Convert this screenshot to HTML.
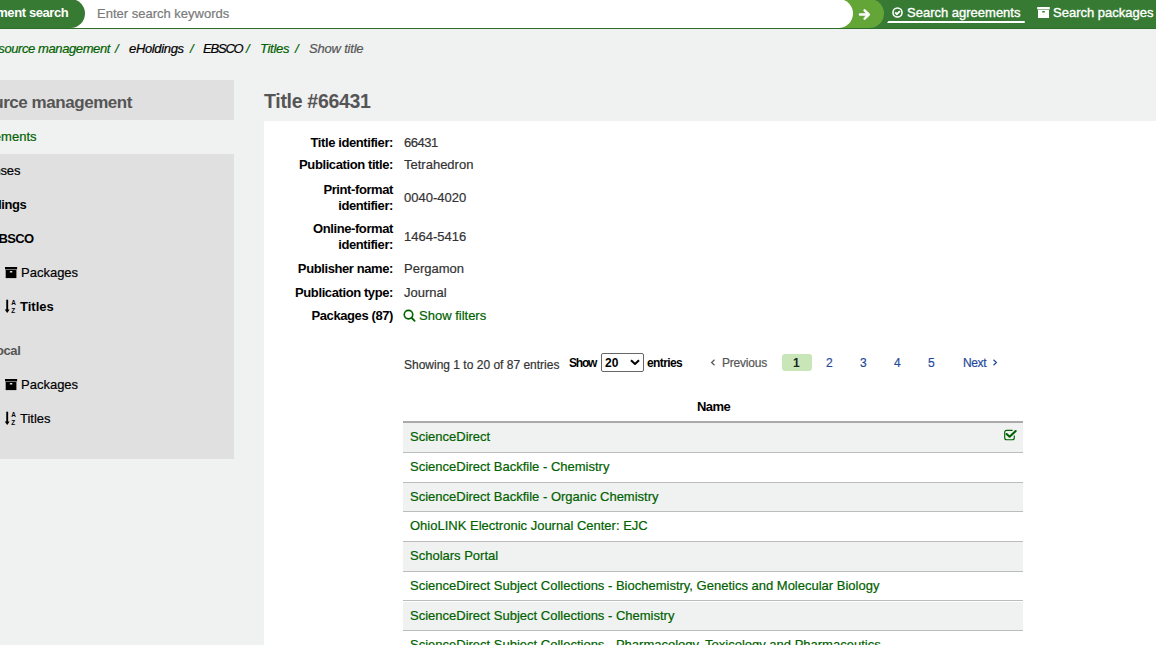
<!DOCTYPE html>
<html><head><meta charset="utf-8">
<style>
*{box-sizing:border-box;margin:0;padding:0}
html,body{width:1156px;height:645px;overflow:hidden}
body{background:#f0f1f1;font-family:"Liberation Sans",sans-serif;font-size:13px;color:#000;position:relative}
.a{position:absolute;white-space:nowrap;line-height:16px;-webkit-text-stroke-width:0.2px}
.lbl,.a[style*="bold"],.wt{-webkit-text-stroke-width:0}
#hdr{position:absolute;left:0;top:0;width:1156px;height:29px;background:#377a34;border-bottom:1px solid #2d6e2a}
#tab{position:absolute;left:-60px;top:-1px;width:145px;height:29px;border-radius:0 15px 15px 0;background:#377a34}
#inp{position:absolute;left:60px;top:-1px;width:793px;height:29px;background:#fff;border-radius:0 15px 15px 0}
#btn{position:absolute;left:838px;top:-1px;width:46px;height:29px;background:#63a537;border-radius:0 15px 15px 0}
.wt{color:#fff;font-weight:bold;font-size:13px}
.bc{font-style:italic;font-size:13px}
.g{color:#006100}
#side{position:absolute;left:0;top:80px;width:234px;height:379px;background:#e0e0e0}
#sidecur{position:absolute;left:0;top:120px;width:234px;height:34px;background:#f0f1f1}
#main{position:absolute;left:264px;top:121px;width:892px;height:524px;background:#fff}
.lbl{font-weight:bold;text-align:right;right:763px;letter-spacing:-0.4px}
.val{left:404px;color:#333}
.pg{color:#1f4b99;font-size:12px}
.row{position:absolute;left:403px;width:620px;border-bottom:1px solid #bcbcbc}
.row.odd{background:#f0f1f1}
.row span{position:absolute;left:7px;color:#006100;white-space:nowrap;-webkit-text-stroke:0.2px #006100}
</style></head><body>
<div id="hdr"></div>
<div id="btn"></div>
<div id="inp"></div>
<div id="tab"></div>
<div class="a wt" style="right:1087.6px;top:5px;letter-spacing:-0.4px">Agreement search</div>
<div class="a" style="left:97px;top:6px;font-size:13px;color:#7a7a7a">Enter search keywords</div>
<svg class="a" style="left:858px;top:8px" width="13" height="13" viewBox="0 0 13 13"><path d="M2 6.5H10.5M6.6 2.4L10.8 6.5L6.6 10.6" stroke="#fff" stroke-width="2.5" fill="none" stroke-linecap="round" stroke-linejoin="round"/></svg>
<svg class="a" style="left:892px;top:7px" width="11" height="11" viewBox="0 0 11 11"><circle cx="5.5" cy="5.5" r="4.55" stroke="#fff" stroke-width="1.6" fill="none"/><path d="M3.2 5.4L4.9 7.1L7.9 4.1" stroke="#fff" stroke-width="1.9" fill="none"/></svg>
<div class="a wt" style="left:907px;top:5px;font-weight:normal;-webkit-text-stroke:0.35px #fff">Search agreements</div>
<div class="a" style="left:887px;top:21px;width:138px;height:2px;background:#fff;border-radius:1px 1px 1px 0;clip-path:polygon(1.5px 0,100% 0,100% 100%,0 100%)"></div>
<svg class="a" style="left:1037px;top:7px" width="13" height="11" viewBox="0 0 13 11"><rect x="0.2" y="0" width="12.6" height="2.4" fill="#fff"/><rect x="1" y="2.9" width="11" height="8.1" fill="#fff"/><rect x="5.2" y="4.0" width="2.7" height="1.4" rx="0.5" fill="#377a34"/></svg>
<div class="a wt" style="left:1053px;top:5px;font-weight:normal;-webkit-text-stroke:0.35px #fff">Search packages</div>

<div class="a bc g" style="right:1046px;top:41px;letter-spacing:-0.4px">source management</div>
<div class="a bc g" style="left:115px;top:41px">/</div>
<div class="a bc" style="left:129px;top:41px;letter-spacing:-0.35px">eHoldings</div>
<div class="a bc g" style="left:190px;top:41px">/</div>
<div class="a bc" style="left:203px;top:41px;letter-spacing:-1.2px">EBSCO</div>
<div class="a bc g" style="left:246px;top:41px">/</div>
<div class="a bc g" style="left:260px;top:41px;letter-spacing:-0.3px">Titles</div>
<div class="a bc g" style="left:295px;top:41px">/</div>
<div class="a bc" style="left:309px;top:41px;color:#555;letter-spacing:-0.2px">Show title</div>

<div id="side"></div>
<div id="sidecur"></div>
<div class="a" style="right:1024px;top:93px;font-size:17px;letter-spacing:-0.45px;font-weight:bold;color:#555;line-height:20px">E-resource management</div>
<div class="a g" style="right:1119.5px;top:129px">Agreements</div>
<div class="a" style="right:1135.8px;top:163px;letter-spacing:-0.2px">Licenses</div>
<div class="a" style="right:1129.6px;top:197px;font-weight:bold;letter-spacing:-0.4px">eHoldings</div>
<div class="a" style="right:1122.4px;top:231px;font-weight:bold;letter-spacing:-0.6px">EBSCO</div>
<svg class="a" style="left:5px;top:267px" width="13" height="12" viewBox="0 0 13 12"><rect x="0" y="0" width="12.1" height="2.4" fill="#000"/><rect x="0.7" y="2.9" width="10.7" height="8.2" fill="#000"/><rect x="4.8" y="4.0" width="2.6" height="1.4" rx="0.5" fill="#e0e0e0"/></svg>
<div class="a" style="left:21px;top:265px">Packages</div>
<svg class="a" style="left:4px;top:299px" width="13" height="14" viewBox="0 0 13 14"><rect x="2.25" y="0.7" width="1.9" height="10.5" fill="#000"/><path d="M0.7 10.6H5.7L3.2 13.9Z" fill="#000"/><text x="7.2" y="5.8" font-size="6.4" font-weight="bold" font-family="Liberation Sans">A</text><text x="7.3" y="13.5" font-size="6.4" font-weight="bold" font-family="Liberation Sans">Z</text></svg>
<div class="a" style="left:20px;top:299px;font-weight:bold">Titles</div>
<div class="a" style="right:1135.6px;top:343px;font-weight:bold;color:#555;letter-spacing:-0.4px">Local</div>
<svg class="a" style="left:5px;top:379px" width="13" height="12" viewBox="0 0 13 12"><rect x="0" y="0" width="12.1" height="2.4" fill="#000"/><rect x="0.7" y="2.9" width="10.7" height="8.2" fill="#000"/><rect x="4.8" y="4.0" width="2.6" height="1.4" rx="0.5" fill="#e0e0e0"/></svg>
<div class="a" style="left:21px;top:377px">Packages</div>
<svg class="a" style="left:4px;top:411px" width="13" height="14" viewBox="0 0 13 14"><rect x="2.25" y="0.7" width="1.9" height="10.5" fill="#000"/><path d="M0.7 10.6H5.7L3.2 13.9Z" fill="#000"/><text x="7.2" y="5.8" font-size="6.4" font-weight="bold" font-family="Liberation Sans">A</text><text x="7.3" y="13.5" font-size="6.4" font-weight="bold" font-family="Liberation Sans">Z</text></svg>
<div class="a" style="left:20px;top:411px">Titles</div>

<div id="main"></div>
<div class="a" style="left:264px;top:90px;font-size:19.5px;letter-spacing:-0.3px;font-weight:bold;color:#555;line-height:22px">Title #66431</div>

<div class="a lbl" style="top:135px">Title identifier:</div><div class="a val" style="top:135px;letter-spacing:-0.5px">66431</div>
<div class="a lbl" style="top:157px">Publication title:</div><div class="a val" style="top:157px">Tetrahedron</div>
<div class="a lbl" style="top:182px;white-space:normal;width:90px">Print-format<br>identifier:</div><div class="a val" style="top:190px">0040-4020</div>
<div class="a lbl" style="top:221px;white-space:normal;width:90px">Online-format<br>identifier:</div><div class="a val" style="top:229px">1464-5416</div>
<div class="a lbl" style="top:261px">Publisher name:</div><div class="a val" style="top:261px">Pergamon</div>
<div class="a lbl" style="top:285px">Publication type:</div><div class="a val" style="top:285px">Journal</div>
<div class="a lbl" style="top:308px">Packages (87)</div>
<svg class="a" style="left:403px;top:309px" width="13" height="13" viewBox="0 0 13 13"><circle cx="5.5" cy="5.6" r="4.25" stroke="#006100" stroke-width="1.6" fill="none"/><path d="M8.8 9.0L11.6 11.9" stroke="#006100" stroke-width="1.8" stroke-linecap="round"/></svg>
<div class="a g" style="left:419px;top:308px">Show filters</div>

<div class="a" style="left:404px;top:357px;font-size:12px;color:#333">Showing 1 to 20 of 87 entries</div>
<div class="a" style="left:569px;top:355px;font-size:12px;font-weight:bold;letter-spacing:-1.2px">Show</div>
<div class="a" style="left:601px;top:353px;width:43px;height:19px;border:1px solid #666;border-radius:2px;background:#fff"></div>
<div class="a" style="left:605px;top:355px;font-size:12px;font-weight:bold">20</div>
<svg class="a" style="left:630px;top:359px" width="10" height="6" viewBox="0 0 10 6"><path d="M1 1.2L5 5L9 1.2" stroke="#000" stroke-width="2" fill="none"/></svg>
<div class="a" style="left:647px;top:355px;font-size:12px;font-weight:bold;letter-spacing:-0.6px">entries</div>

<svg class="a" style="left:710px;top:359px" width="6" height="7" viewBox="0 0 6 7"><path d="M4.5 0.8L1.6 3.5L4.5 6.2" stroke="#555" stroke-width="1.2" fill="none"/></svg>
<div class="a" style="left:722px;top:355px;font-size:12px;color:#555;letter-spacing:-0.2px">Previous</div>
<div class="a" style="left:782px;top:354px;width:30px;height:17px;border-radius:3px;background:#c9e6b9"></div>
<div class="a" style="left:793px;top:355px;font-size:12px;font-weight:bold;color:#222">1</div>
<div class="a pg" style="left:826px;top:355px">2</div>
<div class="a pg" style="left:860px;top:355px">3</div>
<div class="a pg" style="left:894px;top:355px">4</div>
<div class="a pg" style="left:928px;top:355px">5</div>
<div class="a pg" style="left:963px;top:355px;letter-spacing:-0.4px">Next</div>
<svg class="a" style="left:992px;top:359px" width="6" height="7" viewBox="0 0 6 7"><path d="M1.5 0.8L4.4 3.5L1.5 6.2" stroke="#1f4b99" stroke-width="1.2" fill="none"/></svg>

<div class="a" style="left:697px;top:399px;font-weight:bold;letter-spacing:-0.6px">Name</div>
<div class="a" style="left:403px;top:421px;width:620px;height:2px;background:#aaa"></div>
<div class="row odd" style="top:423px;height:30px"><span style="top:6px">ScienceDirect</span>
<svg style="position:absolute;left:601px;top:6px" width="14" height="12" viewBox="0 0 14 12"><path d="M8.6 1.3H2.7Q0.7 1.3 0.7 3.3V8.7Q0.7 10.7 2.7 10.7H8.3Q10.3 10.7 10.3 8.7V6.6" stroke="#006100" stroke-width="1.15" fill="none"/><path d="M2.6 5.0L5.6 7.7L11.7 2.0" stroke="#006100" stroke-width="2.1" fill="none" stroke-linecap="round" stroke-linejoin="round"/></svg></div>
<div class="row" style="top:453px;height:29.7px"><span style="top:6px">ScienceDirect Backfile - Chemistry</span></div>
<div class="row odd" style="top:482.7px;height:29.7px"><span style="top:6px">ScienceDirect Backfile - Organic Chemistry</span></div>
<div class="row" style="top:512.4px;height:29.7px"><span style="top:6px">OhioLINK Electronic Journal Center: EJC</span></div>
<div class="row odd" style="top:542.1px;height:29.7px"><span style="top:6px">Scholars Portal</span></div>
<div class="row" style="top:571.8px;height:29.7px"><span style="top:6px">ScienceDirect Subject Collections - Biochemistry, Genetics and Molecular Biology</span></div>
<div class="row odd" style="top:601.5px;height:29.7px"><span style="top:6px">ScienceDirect Subject Collections - Chemistry</span></div>
<div class="row" style="top:631.2px;height:29.7px"><span style="top:6px">ScienceDirect Subject Collections - Pharmacology, Toxicology and Pharmaceutics</span></div>
</body></html>
